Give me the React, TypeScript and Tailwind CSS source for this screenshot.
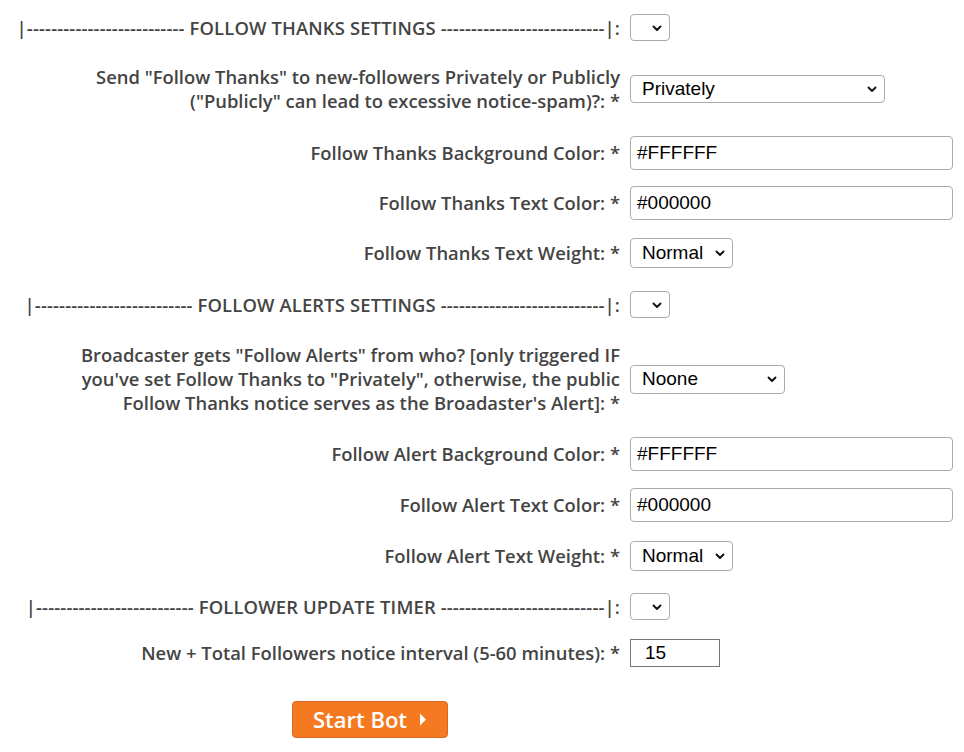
import React from "react";

const labelCls =
  "text-right text-[#444444] text-[18.4px] leading-[24px] font-semibold";
const ctrlFont = { fontFamily: '"Liberation Sans", Arial, sans-serif' };

function Chevron() {
  return (
    <svg
      width="12"
      height="12"
      viewBox="0 0 12 12"
      className="pointer-events-none absolute right-[7px] top-1/2 -translate-y-1/2"
    >
      <path d="M2.5 4.5 L6 8 L9.5 4.5" fill="none" stroke="#111" strokeWidth="1.9" strokeLinecap="round" strokeLinejoin="round" />
    </svg>
  );
}

function Select({ value, w, h }: { value: string; w: string; h: string }) {
  return (
    <div className={`relative ${w} ${h}`}>
      <div
        className="flex h-full w-full items-center rounded-[4px] border border-[#aaaaaa] bg-white pl-[11px] text-[19px] text-black"
        style={ctrlFont}
      >
        {value}
      </div>
      <Chevron />
    </div>
  );
}

function TextInput({ value }: { value: string }) {
  return (
    <div
      className="flex h-[34px] w-[323px] items-center rounded-[4px] border border-[#aaaaaa] bg-white pl-[6px] text-[19px] text-black"
      style={ctrlFont}
    >
      {value}
    </div>
  );
}

function Row({
  children,
  label,
  mt,
  header,
}: {
  children: React.ReactNode;
  label: React.ReactNode;
  mt: string;
  header?: boolean;
}) {
  return (
    <div className={`grid grid-cols-[620px_1fr] items-center gap-x-[10px] ${mt}`}>
      <div className={header ? `${labelCls} whitespace-nowrap tracking-[0.15px]` : labelCls}>{label}</div>
      <div>{children}</div>
    </div>
  );
}

export default function App() {
  return (
    <div
      className="min-h-[752px] w-[964px] bg-white"
      style={{ fontFamily: '"Open Sans", "Noto Sans", sans-serif' }}
    >
      <div className="pt-[14px]">
        <Row header mt="mt-0" label="|-------------------------- FOLLOW THANKS SETTINGS ---------------------------|:">
          <Select value="" w="w-[40px]" h="h-[27px]" />
        </Row>
        <Row
          mt="mt-[24px]"
          label={
            <>
              Send "Follow Thanks" to new-followers Privately or Publicly
              <br />
              ("Publicly" can lead to excessive notice-spam)?: *
            </>
          }
        >
          <Select value="Privately" w="w-[255px]" h="h-[28px]" />
        </Row>
        <Row mt="mt-[23px]" label="Follow Thanks Background Color: *">
          <TextInput value="#FFFFFF" />
        </Row>
        <Row mt="mt-[16px]" label="Follow Thanks Text Color: *">
          <TextInput value="#000000" />
        </Row>
        <Row mt="mt-[18px]" label="Follow Thanks Text Weight: *">
          <Select value="Normal" w="w-[103px]" h="h-[30px]" />
        </Row>
        <Row header mt="mt-[23px]" label="|-------------------------- FOLLOW ALERTS SETTINGS ---------------------------|:">
          <Select value="" w="w-[40px]" h="h-[27px]" />
        </Row>
        <Row
          mt="mt-[25px]"
          label={
            <>
              Broadcaster gets "Follow Alerts" from who? [only triggered IF
              <br />
              you've set Follow Thanks to "Privately", otherwise, the public
              <br />
              Follow Thanks notice serves as the Broadaster's Alert]: *
            </>
          }
        >
          <Select value="Noone" w="w-[155px]" h="h-[29px]" />
        </Row>
        <Row mt="mt-[22px]" label="Follow Alert Background Color: *">
          <TextInput value="#FFFFFF" />
        </Row>
        <Row mt="mt-[17px]" label="Follow Alert Text Color: *">
          <TextInput value="#000000" />
        </Row>
        <Row mt="mt-[19px]" label="Follow Alert Text Weight: *">
          <Select value="Normal" w="w-[103px]" h="h-[30px]" />
        </Row>
        <Row header mt="mt-[22px]" label="|-------------------------- FOLLOWER UPDATE TIMER ---------------------------|:">
          <Select value="" w="w-[40px]" h="h-[27px]" />
        </Row>
        <Row mt="mt-[19px]" label="New + Total Followers notice interval (5-60 minutes): *">
          <div
            className="flex h-[28px] w-[90px] items-center border border-[#767676] bg-white pl-[14px] text-[19px] text-black"
            style={ctrlFont}
          >
            15
          </div>
        </Row>
        <div className="mt-[34px] pl-[292px]">
          <button className="flex h-[37px] w-[156px] items-center justify-center gap-[12px] rounded-[4px] border border-[#d9691c] bg-[#f47920] text-[22px] font-semibold text-white">
            <span>Start Bot</span>
            <svg width="8" height="13" viewBox="0 0 8 13">
              <path d="M1 0.5 L7 6.5 L1 12.5 Z" fill="#fff" />
            </svg>
          </button>
        </div>
      </div>
    </div>
  );
}
